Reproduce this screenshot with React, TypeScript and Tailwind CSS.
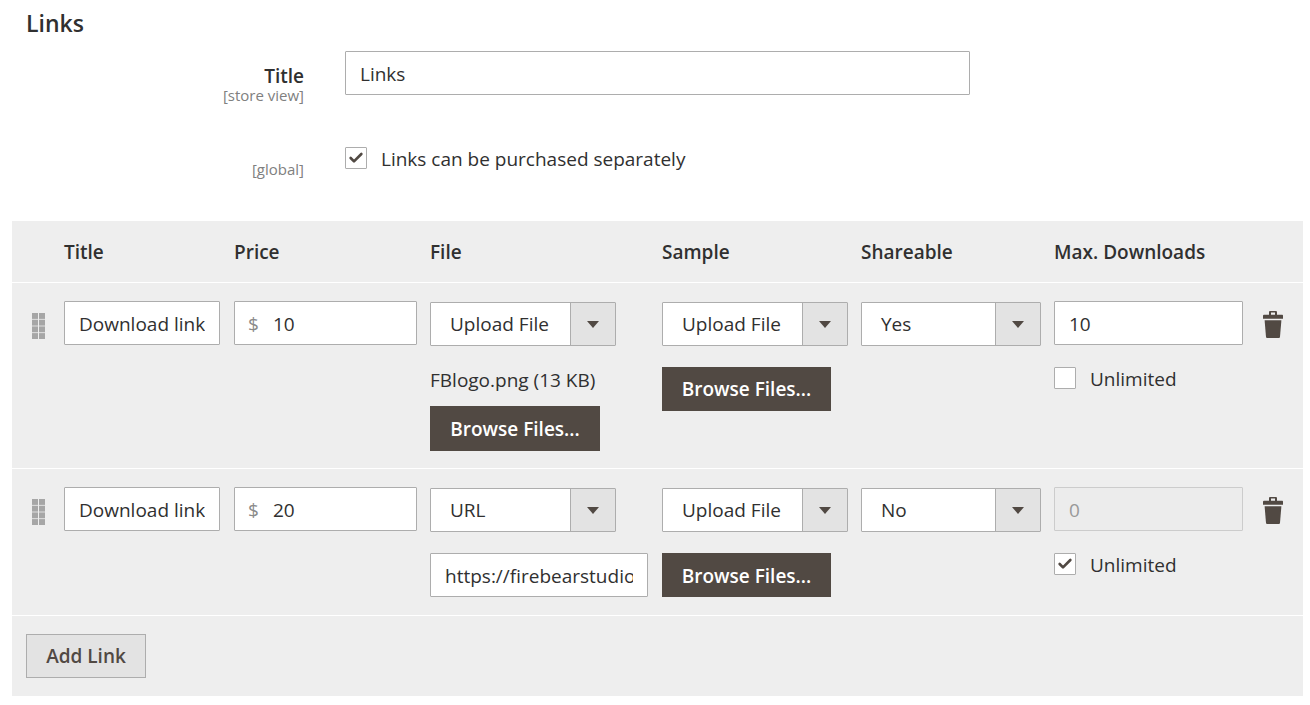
import { Check } from "lucide-react";

const cols = "grid grid-cols-[52px_170px_196px_232px_199px_193px_208px_1fr]";
const box = "h-[44px] border border-[#adadad] rounded-[1px] bg-white text-[#303030]";

function Field({ value, className = "" }: { value: string; className?: string }) {
  return (
    <input
      readOnly
      value={value}
      className={`${box} px-[14px] pt-[1px] text-[19px] outline-none ${className}`}
    />
  );
}

function Select({ value, className = "w-[186px]" }: { value: string; className?: string }) {
  return (
    <div className={`${box} mt-[1px] flex ${className}`}>
      <span className="flex-1 pl-[19px] text-[19px] leading-[43px]">{value}</span>
      <span className="flex w-[45px] items-center justify-center border-l border-[#adadad] bg-[#e3e3e3]">
        <span className="h-0 w-0 border-x-[6px] border-t-[7px] border-x-transparent border-t-[#514943]" />
      </span>
    </div>
  );
}

function Browse({ className = "" }: { className?: string }) {
  return (
    <div className={`flex items-center justify-center bg-[#514943] text-[19px] font-semibold text-white ${className}`}>
      Browse Files...
    </div>
  );
}

function Checkbox({ checked = false }: { checked?: boolean }) {
  return (
    <span className="flex h-[22px] w-[22px] items-center justify-center rounded-[1px] border border-[#adadad] bg-white">
      {checked && <Check size={16} strokeWidth={4} className="text-[#514943]" />}
    </span>
  );
}

function Handle() {
  return (
    <svg width="13" height="26" viewBox="0 0 13 26" className="fill-[#a6a6a6]">
      {[0, 6.7, 13.4, 20.1].map((y) => (
        <g key={y}>
          <rect x="0" y={y} width="6" height="5.9" />
          <rect x="7" y={y} width="6" height="5.9" />
        </g>
      ))}
    </svg>
  );
}

function Trash() {
  return (
    <svg width="22" height="27" viewBox="0 0 22 28" preserveAspectRatio="none" className="fill-[#514943]">
      <path d="M7 4V1.2C7 .5 7.5 0 8.2 0h5.6c.7 0 1.2.5 1.2 1.2V4h5c.6 0 1 .4 1 1v3H1V5c0-.6.4-1 1-1h5zm2-2.4V4h4V1.6H9z" />
      <path d="M2.6 9.5h16.8L18 26.6c-.1.8-.6 1.4-1.4 1.4H5.4c-.8 0-1.3-.6-1.4-1.4L2.6 9.5z" />
    </svg>
  );
}

function Price({ value }: { value: string }) {
  return (
    <div className={`${box} flex w-[183px] items-center pt-[2px] text-[19px]`}>
      <span className="w-[38px] pl-[13px] text-[#8a8a8a]">$</span>
      <span>{value}</span>
    </div>
  );
}

function Unlimited({ checked = false }: { checked?: boolean }) {
  return (
    <div className="mt-[22px] flex items-start gap-[14px] text-[19px] leading-[24px]">
      <Checkbox checked={checked} />
      <span>Unlimited</span>
    </div>
  );
}

export default function App() {
  return (
    <div className="h-[705px] w-[1310px] overflow-hidden bg-white pl-[12px] font-['Open_Sans',sans-serif] text-[#303030]">
      <h2 className="pl-[14px] pt-[7px] text-[23px] leading-[33px] font-semibold">Links</h2>

      <div className="mt-[11px] flex">
        <div className="flex w-[292px] flex-col items-end pt-[13px]">
          <div className="text-[19px] leading-[24px] font-semibold">Title</div>
          <div className="text-[15px] leading-[15px] text-[#808080]">[store view]</div>
        </div>
        <Field value="Links" className="ml-[41px] w-[625px]" />
      </div>

      <div className="mt-[44px] flex h-[74px]">
        <div className="w-[292px] pt-[12px] text-right text-[15px] leading-[20px] text-[#808080]">[global]</div>
        <div className="ml-[41px] flex h-[22px] items-start gap-[14px] text-[19px] leading-[24px]">
          <Checkbox checked />
          <span>Links can be purchased separately</span>
        </div>
      </div>

      <div className="w-[1291px] bg-[#eeeeee]">
        <div className={`${cols} h-[62px] items-center border-b border-white text-[19px] leading-[60px] font-semibold`}>
          <span />
          <span>Title</span>
          <span>Price</span>
          <span>File</span>
          <span>Sample</span>
          <span>Shareable</span>
          <span>Max. Downloads</span>
          <span />
        </div>

        <div className={`${cols} h-[186px] border-b border-white pt-[18px]`}>
          <div className="pl-[20px] pt-[12px]"><Handle /></div>
          <Field value="Download link" className="w-[156px]" />
          <Price value="10" />
          <div>
            <Select value="Upload File" />
            <div className="mt-[22px] text-[19px] leading-[25px]">FBlogo.png (13 KB)</div>
            <Browse className="mt-[13px] h-[45px] w-[170px] pt-[2px]" />
          </div>
          <div>
            <Select value="Upload File" />
            <Browse className="mt-[21px] h-[44px] w-[169px]" />
          </div>
          <Select value="Yes" className="w-[180px]" />
          <div>
            <Field value="10" className="w-[189px]" />
            <Unlimited />
          </div>
          <div className="pt-[10px]"><Trash /></div>
        </div>

        <div className={`${cols} h-[147px] border-b border-white pt-[18px]`}>
          <div className="pl-[20px] pt-[12px]"><Handle /></div>
          <Field value="Download link" className="w-[156px]" />
          <Price value="20" />
          <div>
            <Select value="URL" />
            <Field value="https://firebearstudio.com" className="mt-[21px] w-[218px]" />
          </div>
          <div>
            <Select value="Upload File" />
            <Browse className="mt-[21px] h-[44px] w-[169px] pt-[2px]" />
          </div>
          <Select value="No" className="w-[180px]" />
          <div>
            <input
              readOnly
              value="0"
              className="h-[44px] w-[189px] rounded-[1px] border border-[#cccccc] bg-[#ececec] px-[14px] pt-[1px] text-[19px] text-[#999999] outline-none"
            />
            <Unlimited checked />
          </div>
          <div className="pt-[10px]"><Trash /></div>
        </div>

        <div className="h-[80px] pl-[14px] pt-[18px]">
          <div className="flex h-[44px] w-[120px] items-center justify-center border border-[#adadad] bg-[#e3e3e3] text-[19px] font-semibold text-[#514943]">
            Add Link
          </div>
        </div>
      </div>
    </div>
  );
}
